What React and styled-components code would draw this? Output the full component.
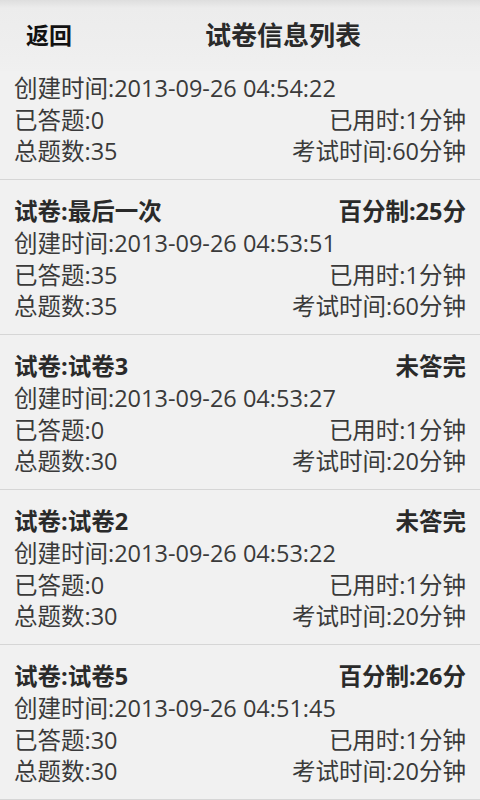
import React from "react";
import styled, { createGlobalStyle } from "styled-components";

const Global = createGlobalStyle`
  html, body { margin: 0; padding: 0; background: #f1f1f1; }
  body { font-family: "Open Sans", "Noto Sans CJK SC", sans-serif; color: #333; }
`;

const Screen = styled.div`
  width: 480px;
  height: 800px;
  display: flex;
  flex-direction: column;
  overflow: hidden;
  background: #f1f1f1;
`;

const Header = styled.header`
  height: 71px;
  flex: none;
  display: flex;
  align-items: center;
  padding-bottom: 3px;
  box-sizing: border-box;
  background: linear-gradient(#dedede 0px, #ececec 8px, #efefef 60px, #f0f0f0 100%);
`;

const Back = styled.div`
  width: 86px;
  padding-left: 26px;
  box-sizing: border-box;
  font-size: 23px;
  font-weight: bold;
  color: #111;
`;

const Title = styled.h1`
  flex: 1;
  margin: 0;
  text-align: center;
  font-size: 26px;
  font-weight: bold;
  color: #2a2a2a;
`;

const List = styled.div`
  flex: 1;
  overflow: hidden;
`;

const Card = styled.div`
  padding: ${(p) => (p.$partial ? "0" : "14px")} 14px 13px;
  border-bottom: 1px solid #d6d6d6;
  display: flex;
  flex-direction: column;
`;

const Row = styled.div`
  display: flex;
  justify-content: space-between;
  align-items: center;
  height: 31.75px;
  font-size: 23.5px;
  font-weight: ${(p) => (p.$bold ? "bold" : "normal")};
  color: ${(p) => (p.$bold ? "#2a2a2a" : "#3a3a3a")};
  white-space: nowrap;
`;

const papers = [
  { partial: true, created: "2013-09-26 04:54:22", answered: 0, used: 1, total: 35, time: 60 },
  { name: "最后一次", status: "百分制:25分", created: "2013-09-26 04:53:51", answered: 35, used: 1, total: 35, time: 60 },
  { name: "试卷3", status: "未答完", created: "2013-09-26 04:53:27", answered: 0, used: 1, total: 30, time: 20 },
  { name: "试卷2", status: "未答完", created: "2013-09-26 04:53:22", answered: 0, used: 1, total: 30, time: 20 },
  { name: "试卷5", status: "百分制:26分", created: "2013-09-26 04:51:45", answered: 30, used: 1, total: 30, time: 20 },
];

export default function App() {
  return (
    <Screen>
      <Global />
      <Header>
        <Back>返回</Back>
        <Title>试卷信息列表</Title>
      </Header>
      <List>
        {papers.map((p, i) => (
          <Card key={i} $partial={p.partial}>
            {!p.partial && (
              <Row $bold>
                <span>试卷:{p.name}</span>
                <span>{p.status}</span>
              </Row>
            )}
            <Row>
              <span>创建时间:{p.created}</span>
            </Row>
            <Row>
              <span>已答题:{p.answered}</span>
              <span>已用时:{p.used}分钟</span>
            </Row>
            <Row>
              <span>总题数:{p.total}</span>
              <span>考试时间:{p.time}分钟</span>
            </Row>
          </Card>
        ))}
      </List>
    </Screen>
  );
}
